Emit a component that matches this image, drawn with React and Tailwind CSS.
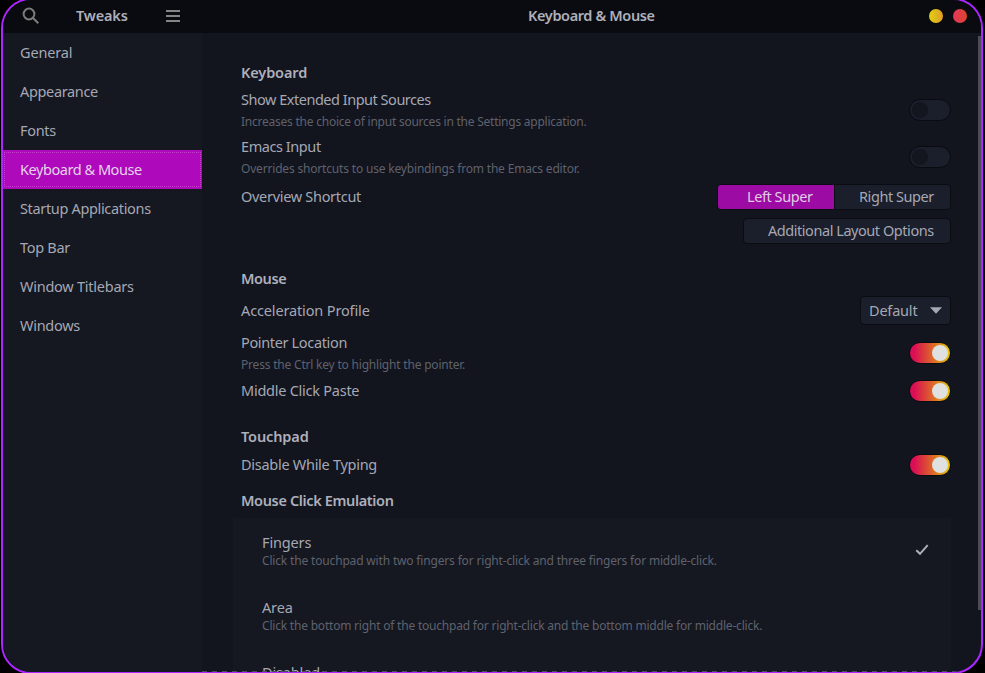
const NAV = [
  ["General", "tracking-[-0.15px]"],
  ["Appearance", "tracking-[-0.35px]"],
  ["Fonts", "tracking-[-0.3px]"],
  ["Keyboard & Mouse", "tracking-[-0.45px]"],
  ["Startup Applications", "tracking-[-0.34px]"],
  ["Top Bar", "tracking-[-0.3px]"],
  ["Window Titlebars", "tracking-[-0.25px]"],
  ["Windows", "tracking-[-0.28px]"],
];

function Heading({ children, className = "" }) {
  return <h2 className={`h-[22px] leading-[20px] font-semibold text-[#adb0bb] ${className}`}>{children}</h2>;
}

function Switch({ on = false }) {
  return on ? (
    <div className="flex h-[22px] w-[42px] items-center justify-end rounded-full border border-[#0a0c12] bg-[linear-gradient(90deg,#db0d55_0%,#db0d55_12%,#dd7422_62%,#e6cf00_100%)] bg-origin-border pr-[2px]">
      <span className="size-4 rounded-full bg-[#e0e0e0]" />
    </div>
  ) : (
    <div className="flex h-[22px] w-[42px] items-center rounded-full border border-[#090b10] bg-[#1b1e2b] pl-[2px]">
      <span className="size-4 rounded-full bg-[#13151f]" />
    </div>
  );
}

function Setting({ title, className = "", children }) {
  return (
    <div className={`flex items-center justify-between ${className}`}>
      <div className="h-[26px] leading-[24px]">{title}</div>
      <div className="tracking-normal">{children}</div>
    </div>
  );
}

function DescribedSetting({ title, desc, className = "", descClass, children }) {
  return (
    <div className={`flex items-start justify-between ${className}`}>
      <div>
        <div className="h-[26px] leading-[25px]">{title}</div>
        <div className={`h-[18px] text-[12px] leading-[18px] text-[#5f626d] ${descClass}`}>{desc}</div>
      </div>
      <div className="mt-3">{children}</div>
    </div>
  );
}

function Option({ title, desc, descClass, checked }) {
  return (
    <div className="flex h-[65px] items-center justify-between pr-[22px] pl-[29px]">
      <div className="pt-[2px]">
        <div className="h-[19px] leading-[19px] tracking-[-0.15px]">{title}</div>
        <div className={`h-[18px] text-[12px] leading-[18px] text-[#5f626d] ${descClass}`}>{desc}</div>
      </div>
      {checked && (
        <svg className="mb-[2px]" width="14" height="12" viewBox="0 0 14 12" fill="none" stroke="#adb0bb" strokeWidth="2">
          <path d="M1.3 6.2 L5 9.8 L12.7 1.2" />
        </svg>
      )}
    </div>
  );
}

export default function App() {
  return (
    <div className="h-[673px] w-[985px] overflow-hidden bg-black font-['Noto_Sans',sans-serif] text-[14.5px] whitespace-nowrap text-[#a5a8b3]">
      <div className="relative -mt-[2px] ml-px flex h-[676px] w-[982px] flex-col overflow-hidden rounded-[30px] border-2 border-[#ae26ff] bg-[#12141e]">
        <header className="flex h-[33px] shrink-0 items-center bg-[#0a0b10] pb-[2px]">
          <div className="flex w-[199px] items-center">
            <svg className="ml-[19px]" width="18" height="18" viewBox="0 0 18 18" fill="none" stroke="#7b7b7b" strokeWidth="2">
              <circle cx="7" cy="7" r="5.4" />
              <path d="M11 11 L16.3 16.3" />
            </svg>
            <span className="ml-[36px] font-semibold tracking-[-0.15px] text-[#adb0bb]">Tweaks</span>
            <div className="ml-auto mr-[22px] flex w-[14px] flex-col gap-[3px]">
              <i className="h-[2px] bg-[#858585]" />
              <i className="h-[2px] bg-[#858585]" />
              <i className="h-[2px] bg-[#858585]" />
            </div>
          </div>
          <div className="flex-1 pl-[326px] font-semibold tracking-[-0.38px] text-[#adb0bb]">Keyboard &amp; Mouse</div>
          <div className="flex gap-[10px] pr-[14px]">
            <i className="size-[14px] rounded-full bg-linear-to-r from-[#dfd00c] to-[#e09d26]" />
            <i className="size-[14px] rounded-full bg-linear-to-r from-[#e33559] to-[#de4427]" />
          </div>
        </header>
        <div className="flex min-h-0 flex-1">
          <nav className="w-[199px] shrink-0 bg-[#151721]">
            {NAV.map(([name, tracking]) =>
              name === "Keyboard & Mouse" ? (
                <div key={name} className="h-[39px] bg-[#ae09ba] px-px py-[2px]">
                  <div className="h-[35px] border border-dotted border-[#c53fcf] pl-[15px] leading-[32px] text-[#e6d3ea]">
                    <span className={tracking}>{name}</span>
                  </div>
                </div>
              ) : (
                <div key={name} className="h-[39px] pl-[17px] leading-[39px]">
                  <span className={tracking}>{name}</span>
                </div>
              )
            )}
          </nav>
          <main className="min-w-0 flex-1 overflow-hidden pt-[29px] pr-[27px] pl-[31px]">
            <div className="pl-2">
              <Heading className="tracking-[-0.12px]">Keyboard</Heading>
              <DescribedSetting className="mt-[3px] h-[47px] tracking-[-0.48px]" descClass="tracking-[-0.235px]" title="Show Extended Input Sources" desc="Increases the choice of input sources in the Settings application."><Switch /></DescribedSetting>
              <DescribedSetting className="h-[47px] tracking-[-0.43px]" descClass="tracking-[-0.18px]" title="Emacs Input" desc="Overrides shortcuts to use keybindings from the Emacs editor."><Switch /></DescribedSetting>
              <Setting className="mt-[3px] h-[26px] tracking-[-0.3px]" title="Overview Shortcut">
                <div className="flex h-[26px] w-[234px] overflow-hidden rounded-[4px] border border-[#0a0c12] bg-[#1b1e2b] leading-[22px] tracking-[-0.43px]">
                  <div className="w-[117px] border-r border-[#0a0c12] bg-[#9c0ba4] pl-[29px] text-[#e0cde3]">Left Super</div>
                  <div className="pl-[24px]">Right Super</div>
                </div>
              </Setting>
              <div className="mt-2 ml-auto h-[26px] w-[208px] rounded-[4px] border border-[#0a0c12] bg-[#1b1e2b] pl-[24px] leading-[22px] tracking-[-0.45px]">Additional Layout Options</div>
              <Heading className="mt-6 tracking-[-0.4px]">Mouse</Heading>
              <Setting className="mt-[6px] h-[29px] tracking-[-0.14px]" title="Acceleration Profile">
                <div className="flex h-[29px] w-[91px] items-center justify-between rounded-[4px] border border-[#0a0c12] bg-[#1b1e2b] pr-2 pl-2 tracking-[-0.2px]">
                  Default
                  <svg width="12" height="7" viewBox="0 0 12 7" fill="#a5a8b3"><path d="M0 0.3H12L6 6.8Z" /></svg>
                </div>
              </Setting>
              <DescribedSetting className="mt-[5px] h-[46px] tracking-[-0.35px]" descClass="tracking-[-0.2px]" title="Pointer Location" desc="Press the Ctrl key to highlight the pointer."><Switch on /></DescribedSetting>
              <Setting className="mt-[2px] h-[26px] tracking-[-0.25px]" title="Middle Click Paste"><Switch on /></Setting>
              <Heading className="mt-[22px] tracking-[-0.12px]">Touchpad</Heading>
              <Setting className="mt-[4px] h-[26px] tracking-[-0.28px]" title="Disable While Typing"><Switch on /></Setting>
              <Heading className="mt-3 tracking-[-0.36px]">Mouse Click Emulation</Heading>
            </div>
            <div className="mt-[6px] bg-[#151721]">
              <Option title="Fingers" descClass="tracking-[-0.167px]" desc="Click the touchpad with two fingers for right-click and three fingers for middle-click." checked />
              <Option title="Area" descClass="tracking-[-0.205px]" desc="Click the bottom right of the touchpad for right-click and the bottom middle for middle-click." />
              <Option title="Disabled" descClass="tracking-[-0.2px]" desc="Don’t use mouse click emulation." />
            </div>
          </main>
          <div className="w-[3px] shrink-0 pt-[3px]">
            <div className="h-[574px] bg-[#4b4c55]" />
          </div>
        </div>
        <div className="absolute right-[22px] bottom-0 left-[199px] h-px bg-[repeating-linear-gradient(90deg,#4b4c55_0px,#4b4c55_5px,transparent_5px,transparent_10px)]" />
      </div>
    </div>
  );
}
